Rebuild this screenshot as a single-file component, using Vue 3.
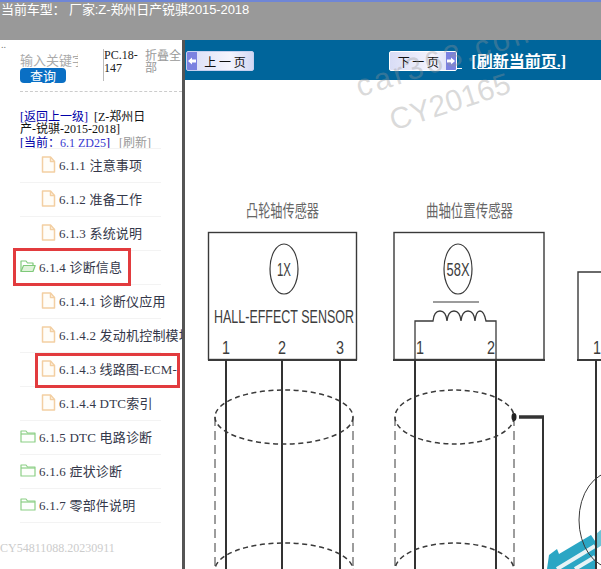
<script setup>
const topItems = [
  { id: '611', type: 'file', label: '6.1.1 注意事项' },
  { id: '612', type: 'file', label: '6.1.2 准备工作' },
  { id: '613', type: 'file', label: '6.1.3 系统说明' },
  { id: '614', type: 'open', label: '6.1.4 诊断信息', mark: true },
  { id: '6141', type: 'file', label: '6.1.4.1 诊断仪应用' },
  { id: '6142', type: 'file', label: '6.1.4.2 发动机控制模块' },
  { id: '6143', type: 'file', label: '6.1.4.3 线路图-ECM-', mark: true },
  { id: '6144', type: 'file', label: '6.1.4.4 DTC索引' },
  { id: '615', type: 'folder', label: '6.1.5 DTC 电路诊断' },
  { id: '616', type: 'folder', label: '6.1.6 症状诊断' },
  { id: '617', type: 'folder', label: '6.1.7 零部件说明' },
]

const dashV = [214, 352, 394, 513]
const wires = [225, 281, 339, 414, 495, 595]
const ellipses = [
  { cx: 283, cy: 417, rx: 69 },
  { cx: 453.5, cy: 417, rx: 59.5 },
  { cx: 283, cy: 570, rx: 69 },
  { cx: 453.5, cy: 570, rx: 59.5 },
]
const pins = [
  { x: 225, t: '1' },
  { x: 281, t: '2' },
  { x: 339, t: '3' },
  { x: 419, t: '1' },
  { x: 490, t: '2' },
  { x: 596, t: '1' },
]
</script>

<template>
  <div class="page">
    <header class="topbar">当前车型： 厂家:Z-郑州日产锐骐2015-2018</header>
    <div class="main">
      <aside class="side">
        <span class="dots">..</span>
        <div class="search">
          <div class="search-left">
            <span class="kw">输入关键字</span>
            <button class="query">查询</button>
          </div>
          <div class="code">PC.18-147</div>
          <div class="fold">折叠全部</div>
        </div>
        <div class="crumbs">
          <div class="crumb-1"><a class="lnk">[返回上一级]</a>&nbsp; [Z-郑州日产-锐骐-2015-2018]</div>
          <div class="crumb-2"><a class="lnk">[当前：<span class="cur">6.1 ZD25</span>]</a>&nbsp;&nbsp; <span class="refresh">[刷新]</span></div>
        </div>
        <ul class="tree">
          <li
            v-for="item in topItems"
            :key="item.id"
            class="row"
            :class="{ sub: item.type === 'file' }"
          >
            <span class="row-in" :class="{ mark: item.mark }">
              <svg v-if="item.type === 'file'" class="ic" viewBox="0 0 15 17" fill="#fffdf8" stroke="#f3cfa2" stroke-width="1.5" stroke-linejoin="round">
                <path d="M1.5 1h8l4 4.5V16h-12z" />
                <path d="M9.5 1v4.5h4" fill="none" />
              </svg>
              <svg v-else-if="item.type === 'open'" class="ic-f" viewBox="0 0 16 14" fill="#fff" stroke="#7fc97a" stroke-width="1.2" stroke-linejoin="round">
                <path d="M1 12.5V2h5l1.5 2H13v2.5" />
                <path d="M1 12.5 3.5 6.5H15.2L13 12.5z" fill="#dff3da" />
              </svg>
              <svg v-else class="ic-f" viewBox="0 0 16 14" fill="#fdfffc" stroke="#8ccf85" stroke-width="1.2" stroke-linejoin="round">
                <path d="M1 2h5l1.5 2H15v9H1z" />
                <path d="M1 5h14" fill="none" />
              </svg>
              <span class="txt">{{ item.label }}</span>
            </span>
          </li>
        </ul>
        <div class="serial">CY54811088.20230911</div>
      </aside>
      <section class="content">
        <div class="toolbar">
          <button class="pg pg-prev">
            <span class="arr">
              <svg viewBox="0 0 10 10" width="10" height="10" fill="#fff"><path d="M1 5 5 1.5V3.5H9V6.5H5V8.5z" /></svg>
            </span>
            <span class="pg-t">上 一 页</span>
          </button>
          <div class="tool-r">
            <button class="pg pg-next">
              <span class="pg-t">下 一 页</span>
              <span class="arr">
                <svg viewBox="0 0 10 10" width="10" height="10" fill="#fff"><path d="M9 5 5 1.5V3.5H1V6.5H5V8.5z" /></svg>
              </span>
            </button>
            <span class="tail"></span>
            <a class="reload">[刷新当前页.]</a>
          </div>
        </div>
        <div class="diagram">
          <svg class="wd" viewBox="184 80 417 489" width="417" height="489">
            <g>
              <path d="M546 569 548 555 556 549 558 554 590 535 594 541V569z" fill="#2ba6c4" />
              <path d="M595 534 601 529V545L595 549z" fill="#6cc3d6" />
              <path d="M556 569 594 546M574 569 594 557" stroke="#e8f3f6" stroke-width="4" fill="none" />
            </g>
            <g fill="none" stroke="#3a3a3a">
              <rect x="207.5" y="232.5" width="148" height="127" stroke-width="1.4" />
              <rect x="393" y="232.5" width="150" height="127" stroke-width="1.4" />
              <path d="M601 272H577V360H601" stroke-width="1.4" />
              <path d="M207 360H356M392 360H544M576 360H601" stroke-width="2" />
              <ellipse cx="283" cy="269" rx="14" ry="25" stroke-width="1.2" />
              <ellipse cx="457" cy="269" rx="14" ry="25" stroke-width="1.2" />
              <path d="M432 302H478" stroke-width="1.2" />
              <path d="M414 360V321H432q1-10 7-10t7 10q1-10 7-10t7 10q1-10 7-10t7 10q1-10 5-10t6 10H495V360" stroke-width="1.3" />
              <line v-for="x in wires" :key="x" :x1="x" :x2="x" y1="360" y2="569" stroke="#333" stroke-width="2" />
              <ellipse v-for="(e, i) in ellipses" :key="i" :cx="e.cx" :cy="e.cy" :rx="e.rx" ry="27" stroke-width="1.5" stroke-dasharray="5 3.5" />
              <line v-for="x in dashV" :key="'d' + x" :x1="x" :x2="x" y1="417" y2="569" stroke-width="1" stroke-dasharray="9 5" />
              <path d="M518 417H543" stroke="#333" stroke-width="3.5" />
              <path d="M542 417V569" stroke="#333" stroke-width="2" />
              <ellipse cx="612" cy="520" rx="34" ry="48" stroke-width="1" />
            </g>
            <ellipse cx="513" cy="417" rx="2.5" ry="4" fill="#222" />
            <g fill="#3d3d3d">
              <text x="245" y="217" class="cn" textLength="73" lengthAdjust="spacingAndGlyphs">凸轮轴传感器</text>
              <text x="425" y="217" class="cn" textLength="87" lengthAdjust="spacingAndGlyphs">曲轴位置传感器</text>
              <text x="276" y="276" class="nm" textLength="14" lengthAdjust="spacingAndGlyphs">1X</text>
              <text x="445.5" y="276" class="nm" textLength="23" lengthAdjust="spacingAndGlyphs">58X</text>
              <text x="213" y="323" class="hall" textLength="140" lengthAdjust="spacingAndGlyphs">HALL-EFFECT SENSOR</text>
              <text v-for="p in pins" :key="p.x" :x="p.x - 4" y="354" class="nm" textLength="8" lengthAdjust="spacingAndGlyphs">{{ p.t }}</text>
            </g>
          </svg>
        </div>
        <div class="wm wm-a">car363.com</div>
        <div class="wm wm-b">CY20165</div>
      </section>
    </div>
  </div>
</template>

<style>
html, body { margin: 0; background: #fff; overflow: hidden; }
</style>

<style scoped>
.page {
  width: 601px;
  height: 569px;
  overflow: hidden;
  font-family: "Liberation Serif", "Noto Sans CJK SC", serif;
  display: flex;
  flex-direction: column;
}
.topbar {
  height: 38px;
  flex: none;
  background: #999;
  border-top: 2px solid #6f86d6;
  color: #fff;
  font-family: "Liberation Sans", "Noto Sans CJK SC", sans-serif;
  font-size: 13px;
  letter-spacing: -0.1px;
  line-height: 15px;
  white-space: pre;
  padding-left: 1px;
}
.main { flex: 1; display: flex; min-height: 0; }
.side {
  width: 182px;
  flex: none;
  overflow: hidden;
  background: #fff;
  position: relative;
}
.dots {
  position: absolute;
  left: 1px;
  top: 0;
  font-size: 10px;
  line-height: 10px;
  color: #777;
}
.search {
  height: 52px;
  margin-left: 20px;
  padding-top: 10px;
  box-sizing: border-box;
  border-bottom: 1px dashed #ccc;
  display: flex;
  font-size: 12px;
}
.search-left { width: 83px; flex: none; overflow: hidden; }
.kw {
  display: block;
  width: 58px;
  height: 15px;
  overflow: hidden;
  white-space: nowrap;
  color: #aaa;
  font-size: 13px;
  line-height: 15px;
  margin-top: 3px;
}
.query {
  display: block;
  width: 46px;
  height: 15px;
  padding: 0;
  border: 0;
  border-radius: 4px;
  background: #0a6fc4;
  color: #fff;
  font: 13px/15px "Noto Sans CJK SC", sans-serif;
}
.code {
  width: 41px;
  height: 32px;
  flex: none;
  border-left: 1px solid #bbb;
  color: #222;
  line-height: 13px;
  margin-top: -1px;
  padding-top: 0;
}
.fold {
  width: 37px;
  flex: none;
  color: #999;
  font-size: 12px;
  line-height: 12px;
}
.crumbs {
  margin: 19px 0 0 20px;
  width: 130px;
  height: 38px;
  font-size: 12px;
  line-height: 12px;
  color: #111;
}
.crumb-2 { margin-top: 1px; line-height: 14px; white-space: nowrap; }
.lnk { color: #0000a8; }
.cur { color: #3a3ad0; }
.refresh { color: #999; }
.tree { list-style: none; margin: -1px 0 0; padding: 0; }
.row {
  height: 34px;
  margin-left: 20px;
  width: 141px;
  box-sizing: border-box;
  border-bottom: 1px solid #f3f3f3;
  position: relative;
  white-space: nowrap;
}
.row:first-child { height: 35px; border-top: 1px solid #f3f3f3; }
.row-in {
  position: absolute;
  left: 0;
  top: 6px;
  display: flex;
  align-items: center;
  height: 18px;
}
.sub .row-in { left: 21px; }
.ic { width: 15px; height: 17px; flex: none; margin-right: 3px; }
.ic-f { width: 16px; height: 14px; flex: none; margin-right: 3px; }
.txt { font-size: 13px; color: #34384a; letter-spacing: 0.2px; }
.mark::after {
  content: "";
  position: absolute;
  border: 3px solid #e23b3e;
  pointer-events: none;
}
.row:not(.sub) .mark::after { left: -7px; top: -9px; width: 112px; height: 32px; }
.sub .mark::after { left: -6px; top: -6px; width: 139px; height: 29px; }
.serial {
  margin-top: 18px;
  font-size: 12px;
  color: #ccc;
  white-space: nowrap;
}
.content {
  flex: 1;
  min-width: 0;
  border-left: 3px solid #555;
  display: flex;
  flex-direction: column;
  position: relative;
  overflow: hidden;
}
.toolbar {
  height: 40px;
  flex: none;
  background: #00659b;
  display: flex;
  align-items: flex-start;
  justify-content: space-between;
  padding: 11px 35px 0 1px;
  box-sizing: border-box;
}
.tool-r { display: flex; align-items: flex-start; }
.pg {
  display: flex;
  align-items: center;
  width: 68px;
  height: 20px;
  padding: 0;
  border: 1px solid #c6d0ef;
  border-radius: 2px;
  background: linear-gradient(90deg, #d9ddf6, #f4f4fd 65%, #d2d8f4);
  font: 12px/17px "Noto Sans CJK SC", sans-serif;
  color: #111;
  white-space: pre;
  overflow: hidden;
}
.pg-next { border-color: #fff; }
.pg-t { flex: 1; text-align: center; }
.arr {
  width: 10px;
  height: 100%;
  flex: none;
  background: #7b82e0;
  display: flex;
  align-items: center;
  justify-content: center;
}
.tail {
  width: 5px;
  height: 1px;
  margin-top: 17px;
  background: #fff;
}
.reload {
  margin-left: 9px;
  margin-top: 1px;
  color: #fff;
  font-size: 16px;
  line-height: 20px;
  font-weight: bold;
  text-decoration: underline;
  white-space: nowrap;
}
.diagram { flex: 1; position: relative; overflow: hidden; background: #fff; }
.wd { position: absolute; left: 0; top: 0; }
.cn { font: 17px "Noto Sans CJK SC", sans-serif; fill: #666; }
.nm { font: 18px "Liberation Sans", sans-serif; }
.hall { font: 19px "Liberation Sans", sans-serif; }
.wm {
  position: absolute;
  color: rgba(150, 150, 150, 0.35);
  font-family: "Liberation Sans", sans-serif;
  white-space: nowrap;
  transform: translate(-50%, -50%) rotate(-18deg);
}
.wm-a { left: 263px; top: 18px; font-size: 31px; letter-spacing: 3px; }
.wm-b { left: 265px; top: 62px; font-size: 30px; }
</style>
